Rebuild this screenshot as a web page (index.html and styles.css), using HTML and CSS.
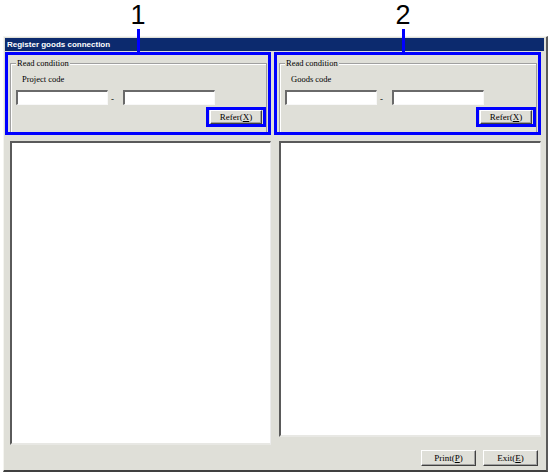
FILE: index.html
```html
<!DOCTYPE html>
<html>
<head>
<meta charset="utf-8">
<link rel="stylesheet" href="styles.css">
</head>
<body>
<div class="callout c1"><span class="num">1</span><span class="stem"></span></div>
<div class="callout c2"><span class="num">2</span><span class="stem"></span></div>
<div class="window">
  <div class="titlebar">Register goods connection</div>
  <div class="client">
    <div class="top-row">
      <div class="panel left">
        <div class="group">
          <div class="legend">Read condition</div>
          <div class="label">Project code</div>
          <div class="inputs"><span class="input"></span><span class="dash">-</span><span class="input"></span></div>
          <div class="btn-row"><span class="hl"><span class="btn refer">Refer(<u>X</u>)</span></span></div>
        </div>
      </div>
      <div class="panel right">
        <div class="group">
          <div class="legend">Read condition</div>
          <div class="label">Goods code</div>
          <div class="inputs"><span class="input"></span><span class="dash">-</span><span class="input"></span></div>
          <div class="btn-row"><span class="hl"><span class="btn refer">Refer(<u>X</u>)</span></span></div>
        </div>
      </div>
    </div>
    <div class="lists">
      <div class="list list-left"></div>
      <div class="list list-right"></div>
    </div>
    <div class="bottom">
      <span class="btn act">Print(<u>P</u>)</span>
      <span class="btn act">Exit(<u>E</u>)</span>
    </div>
  </div>
</div>
</body>
</html>
```
FILE: styles.css
```css
html, body { margin: 0; padding: 0; background: #fff; }
body { width: 551px; height: 476px; overflow: hidden; position: relative; font-family: "Liberation Serif", serif; }

.callout { position: absolute; top: 0; width: 20px; display: flex; flex-direction: column; align-items: center; z-index: 2; }
.c1 { left: 128px; }
.c2 { left: 393px; }
.num { font-family: "Liberation Sans", Arial, sans-serif; font-size: 27px; line-height: 30px; color: #000; display: block; height: 29px; }
.stem { display: block; width: 3px; height: 24px; background: #0000ff; }

.window {
  margin: 36px 0 0 3px;
  width: 545px;
  height: 436px;
  box-sizing: border-box;
  background: #dfdfd8;
  border-top: 1px solid #f4f4f0;
  border-left: 1px solid #f4f4f0;
  border-right: 2px solid #5a5a5a;
  border-bottom: 2px solid #404040;
  padding: 1px;
  display: flex;
  flex-direction: column;
}
.titlebar {
  height: 13px;
  background: #0c2a6e;
  color: #fff;
  font-family: "Liberation Sans", Arial, sans-serif;
  font-weight: bold;
  font-size: 8px;
  line-height: 13px;
  padding-left: 2px;
  margin-right: 1px;
  white-space: nowrap;
}
.client { flex: 1; display: flex; flex-direction: column; padding-top: 1px; }

.top-row { display: flex; gap: 3px; }
.panel { border: 3px solid #0000ff; height: 77px; box-sizing: content-box; padding: 0; overflow: hidden; }
.panel.left { width: 260px; }
.panel.right { width: 261px; }
.group {
  margin: 8px 1px 0 2px;
  height: 80px;
  border: 1px solid #a0a0a0;
  border-bottom: none;
  box-shadow: inset 1px 1px 0 #fff;
  position: relative;
}
.legend {
  position: absolute;
  top: -6px;
  left: 5px;
  background: #dfdfd8;
  padding: 0 1px;
  font-size: 8.5px;
  line-height: 11px;
  color: #000;
}
.label { font-size: 8.5px; line-height: 11px; margin: 10px 0 0 11px; color: #000; }
.inputs { display: flex; align-items: flex-end; margin: 5px 0 0 5px; gap: 0; }
.input {
  width: 89px; height: 12px; background: #fff; display: block;
  border-top: 2px solid #6a6a6a; border-left: 2px solid #6a6a6a;
  border-right: 1px solid #f8f8f8; border-bottom: 1px solid #f8f8f8;
}
.dash { width: 12px; padding-left: 3px; box-sizing: border-box; text-align: left; font-size: 9px; line-height: 10px; margin-bottom: 1px; margin-right: 3px; }
.btn-row { display: flex; justify-content: flex-end; margin: 2px 0 0 0; }
.hl { border: 3px solid #0000ff; padding: 0 1px; display: flex; }
.btn {
  display: flex; align-items: center; justify-content: center;
  box-sizing: border-box;
  background: #dfdfd8;
  border-top: 1px solid #fff; border-left: 1px solid #fff;
  border-right: 1px solid #404040; border-bottom: 1px solid #404040;
  box-shadow: inset -1px -1px 0 #a0a0a0;
  font-size: 9px; color: #000;
}
.refer { width: 52px; height: 14px; }
.btn u { text-underline-offset: 1px; }

.lists { display: flex; padding: 6px 0 0 5px; gap: 8px; align-items: flex-start; }
.list {
  background: #fff; box-sizing: border-box;
  border-top: 2px solid #5a5a5a; border-left: 2px solid #5a5a5a;
  border-right: 1px solid #ececec; border-bottom: 2px solid #e8e8e4;
}
.list-left { width: 261px; height: 304px; }
.list-right { width: 262px; height: 296px; }

.bottom { display: flex; justify-content: flex-end; gap: 7px; padding: 5px 7px 0 0; }
.act { width: 55px; height: 16px; }
```
